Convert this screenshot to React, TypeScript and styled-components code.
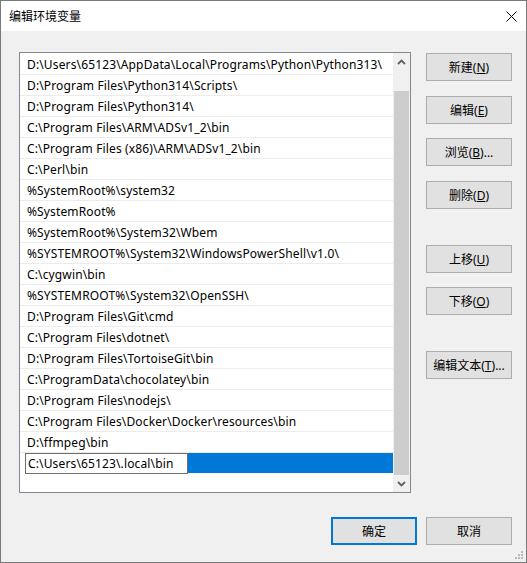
import React from "react";
import styled, { createGlobalStyle } from "styled-components";

const GlobalStyle = createGlobalStyle`
  html, body { margin: 0; padding: 0; background: #ffffff; }
  body {
    font-family: "Segoe UI", "Noto Sans", "Noto Sans CJK SC", sans-serif;
    font-size: 12px;
    color: #000;
  }
  * { box-sizing: border-box; }
`;

const Window = styled.div`
  width: 527px;
  height: 563px;
  border: 1px solid #7a7a7a;
  display: flex;
  flex-direction: column;
  background: #f0f0f0;
  position: relative;
`;

const TitleBar = styled.div`
  height: 30px;
  flex: none;
  background: #ffffff;
  display: flex;
  align-items: center;
  justify-content: space-between;
  padding-left: 8px;
`;

const Title = styled.span`
  font-size: 12px;
  line-height: 28px;
  font-family: "Noto Sans CJK SC", sans-serif;
`;

const CloseBox = styled.div`
  width: 30px;
  height: 30px;
  display: flex;
  align-items: center;
  justify-content: center;
`;

const Content = styled.div`
  flex: 1;
  display: flex;
  flex-direction: column;
  padding: 21px 14px 0 18px;
`;

const MainRow = styled.div`
  display: flex;
  gap: 15px;
`;

const ListBox = styled.div`
  width: 392px;
  height: 441px;
  border: 1px solid #828790;
  background: #ffffff;
  display: flex;
`;

const Rows = styled.div`
  flex: 1;
  padding-top: 1px;
  overflow: hidden;
  letter-spacing: 0.14px;
`;

const Row = styled.div`
  height: 21px;
  padding-top: 1px;
  line-height: 19px;
  border-bottom: 1px solid #ececec;
  padding-left: 7px;
  white-space: nowrap;
  overflow: hidden;
`;

const SelectedRow = styled.div`
  height: 21px;
  padding-left: 5px;
  display: flex;
`;

const Highlight = styled.div`
  flex: 1;
  height: 20px;
  background: #0078d7;
  display: flex;
`;

const EditBox = styled.div`
  width: 163px;
  height: 21px;
  background: #ffffff;
  border: 1px solid #6e6e6e;
  padding-left: 2px;
  line-height: 19px;
  white-space: nowrap;
`;

const ScrollBar = styled.div`
  width: 17px;
  background: #f0f0f0;
  display: flex;
  flex-direction: column;
`;

const ArrowBtn = styled.div`
  height: 17px;
  flex: none;
  display: flex;
  align-items: center;
  justify-content: center;
`;

const Track = styled.div`
  flex: 1;
  display: flex;
  flex-direction: column;
  justify-content: flex-end;
  padding: 0 1px;
`;

const Thumb = styled.div`
  height: 384px;
  background: #cdcdcd;
`;

const ButtonCol = styled.div`
  width: 86px;
  display: flex;
  flex-direction: column;
  padding-top: 1px;
`;

const Button = styled.div<{ $mt?: number; $primary?: boolean }>`
  width: 86px;
  height: 28px;
  margin-top: ${(p) => p.$mt ?? 0}px;
  background: #e1e1e1;
  border: ${(p) => (p.$primary ? "2px solid #0078d7" : "1px solid #adadad")};
  display: flex;
  align-items: center;
  justify-content: center;
  font-size: 12px;
  white-space: nowrap;
  flex: none;
`;

const Footer = styled.div`
  margin-top: 24px;
  display: flex;
  justify-content: flex-end;
  gap: 9px;
`;

const Grip = styled.svg`
  position: absolute;
  right: 2px;
  bottom: 2px;
`;

const paths = [
  "D:\\Users\\65123\\AppData\\Local\\Programs\\Python\\Python313\\",
  "D:\\Program Files\\Python314\\Scripts\\",
  "D:\\Program Files\\Python314\\",
  "C:\\Program Files\\ARM\\ADSv1_2\\bin",
  "C:\\Program Files (x86)\\ARM\\ADSv1_2\\bin",
  "C:\\Perl\\bin",
  "%SystemRoot%\\system32",
  "%SystemRoot%",
  "%SystemRoot%\\System32\\Wbem",
  "%SYSTEMROOT%\\System32\\WindowsPowerShell\\v1.0\\",
  "C:\\cygwin\\bin",
  "%SYSTEMROOT%\\System32\\OpenSSH\\",
  "D:\\Program Files\\Git\\cmd",
  "C:\\Program Files\\dotnet\\",
  "D:\\Program Files\\TortoiseGit\\bin",
  "C:\\ProgramData\\chocolatey\\bin",
  "D:\\Program Files\\nodejs\\",
  "C:\\Program Files\\Docker\\Docker\\resources\\bin",
  "D:\\ffmpeg\\bin",
];

const sideButtons: { label: string; key: string; tail?: string; mt: number }[] = [
  { label: "新建", key: "N", mt: 0 },
  { label: "编辑", key: "E", mt: 15 },
  { label: "浏览", key: "B", tail: "...", mt: 14 },
  { label: "删除", key: "D", mt: 15 },
  { label: "上移", key: "U", mt: 36 },
  { label: "下移", key: "O", mt: 14 },
  { label: "编辑文本", key: "T", tail: "...", mt: 36 },
];

export default function App() {
  return (
    <>
      <GlobalStyle />
      <Window>
        <TitleBar>
          <Title>编辑环境变量</Title>
          <CloseBox>
            <svg width="11" height="11" viewBox="0 0 11 11">
              <path d="M0.5 0.5 L10.5 10.5 M10.5 0.5 L0.5 10.5" stroke="#000" strokeWidth="1" />
            </svg>
          </CloseBox>
        </TitleBar>
        <Content>
          <MainRow>
            <ListBox>
              <Rows>
                {paths.map((p) => (
                  <Row key={p}>{p}</Row>
                ))}
                <SelectedRow>
                  <Highlight>
                    <EditBox>C:\Users\65123\.local\bin</EditBox>
                  </Highlight>
                </SelectedRow>
              </Rows>
              <ScrollBar>
                <ArrowBtn>
                  <svg width="9" height="6" viewBox="0 0 9 6">
                    <path d="M1 5 L4.5 1.5 L8 5" stroke="#606060" strokeWidth="1.8" fill="none" />
                  </svg>
                </ArrowBtn>
                <Track>
                  <Thumb />
                </Track>
                <ArrowBtn>
                  <svg width="9" height="6" viewBox="0 0 9 6">
                    <path d="M1 1 L4.5 4.5 L8 1" stroke="#606060" strokeWidth="1.8" fill="none" />
                  </svg>
                </ArrowBtn>
              </ScrollBar>
            </ListBox>
            <ButtonCol>
              {sideButtons.map((b) => (
                <Button key={b.label} $mt={b.mt}>
                  {b.label}(<u>{b.key}</u>){b.tail ?? ""}
                </Button>
              ))}
            </ButtonCol>
          </MainRow>
          <Footer>
            <Button $primary>确定</Button>
            <Button>取消</Button>
          </Footer>
        </Content>
        <Grip width="10" height="9" viewBox="0 0 10 9">
          <rect x="7" y="0" width="2" height="2" fill="#b8b8b8" />
          <rect x="4" y="3" width="2" height="2" fill="#b8b8b8" />
          <rect x="7" y="3" width="2" height="2" fill="#b8b8b8" />
          <rect x="1" y="6" width="2" height="2" fill="#b8b8b8" />
          <rect x="4" y="6" width="2" height="2" fill="#b8b8b8" />
          <rect x="7" y="6" width="2" height="2" fill="#b8b8b8" />
        </Grip>
      </Window>
    </>
  );
}
